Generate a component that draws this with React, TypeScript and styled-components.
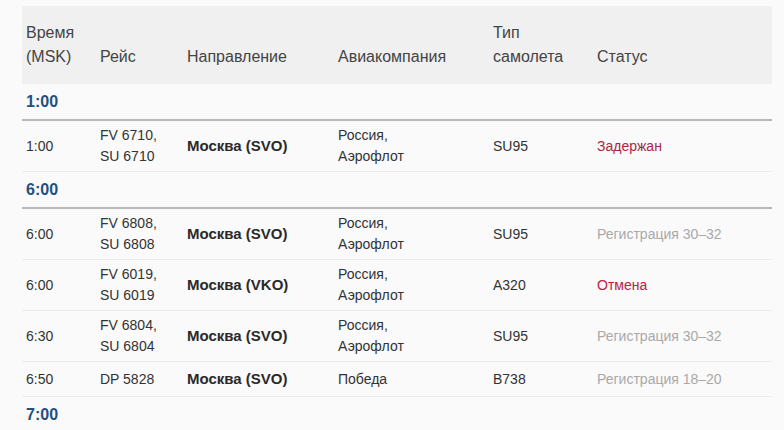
import { Fragment } from "react";
import styled, { createGlobalStyle } from "styled-components";

type Flight = {
  time: string;
  flights: string[];
  dest: string;
  airline: string[];
  plane: string;
  status: string;
  kind: "late" | "cancel" | "muted";
};

type Group = { hour: string; rows: Flight[] };

const aeroflot = ["Россия,", "Аэрофлот"];

const groups: Group[] = [
  {
    hour: "1:00",
    rows: [
      {
        time: "1:00",
        flights: ["FV 6710,", "SU 6710"],
        dest: "Москва (SVO)",
        airline: aeroflot,
        plane: "SU95",
        status: "Задержан",
        kind: "late",
      },
    ],
  },
  {
    hour: "6:00",
    rows: [
      {
        time: "6:00",
        flights: ["FV 6808,", "SU 6808"],
        dest: "Москва (SVO)",
        airline: aeroflot,
        plane: "SU95",
        status: "Регистрация 30–32",
        kind: "muted",
      },
      {
        time: "6:00",
        flights: ["FV 6019,", "SU 6019"],
        dest: "Москва (VKO)",
        airline: aeroflot,
        plane: "A320",
        status: "Отмена",
        kind: "cancel",
      },
      {
        time: "6:30",
        flights: ["FV 6804,", "SU 6804"],
        dest: "Москва (SVO)",
        airline: aeroflot,
        plane: "SU95",
        status: "Регистрация 30–32",
        kind: "muted",
      },
      {
        time: "6:50",
        flights: ["DP 5828"],
        dest: "Москва (SVO)",
        airline: ["Победа"],
        plane: "B738",
        status: "Регистрация 18–20",
        kind: "muted",
      },
    ],
  },
  { hour: "7:00", rows: [] },
];

export default function App() {
  return (
    <>
      <GlobalStyle />
      <Page>
        <Board>
          <colgroup>
            <col style={{ width: 74 }} />
            <col style={{ width: 87 }} />
            <col style={{ width: 151 }} />
            <col style={{ width: 155 }} />
            <col style={{ width: 104 }} />
            <col style={{ width: 179 }} />
          </colgroup>
          <thead>
            <tr>
              <HeadCell>
                Время
                <br />
                (MSK)
              </HeadCell>
              <HeadCell>Рейс</HeadCell>
              <HeadCell>Направление</HeadCell>
              <HeadCell>Авиакомпания</HeadCell>
              <HeadCell>
                Тип
                <br />
                самолета
              </HeadCell>
              <HeadCell>Статус</HeadCell>
            </tr>
          </thead>
          <tbody>
            {groups.map((g) => (
              <Fragment key={g.hour}>
                <tr>
                  <HourCell colSpan={6}>{g.hour}</HourCell>
                </tr>
                {g.rows.map((f, i) => (
                  <tr key={i}>
                    <Cell>{f.time}</Cell>
                    <Cell>
                      {f.flights.map((x) => (
                        <div key={x}>{x}</div>
                      ))}
                    </Cell>
                    <DestCell>{f.dest}</DestCell>
                    <Cell>
                      {f.airline.map((x) => (
                        <div key={x}>{x}</div>
                      ))}
                    </Cell>
                    <Cell>{f.plane}</Cell>
                    <StatusCell $kind={f.kind}>{f.status}</StatusCell>
                  </tr>
                ))}
              </Fragment>
            ))}
          </tbody>
        </Board>
      </Page>
    </>
  );
}

const GlobalStyle = createGlobalStyle`
  body {
    margin: 0;
    background: #fafafa;
    font-family: "Liberation Sans", Arial, sans-serif;
  }
`;

const Page = styled.div`
  padding: 6px 0 0 22px;
  height: 430px;
  overflow: hidden;
  box-sizing: border-box;
`;

const Board = styled.table`
  width: 750px;
  border-collapse: collapse;
  table-layout: fixed;
`;

const HeadCell = styled.th`
  background: #f0f0f0;
  color: #444;
  font-size: 16px;
  font-weight: normal;
  line-height: 24px;
  text-align: left;
  vertical-align: bottom;
  padding: 15px 4px;
`;

const HourCell = styled.td`
  color: #22507f;
  font-size: 16px;
  font-weight: bold;
  line-height: 24px;
  padding: 6px 4px 5px;
  border-bottom: 2px solid #b8b8b8;
`;

const Cell = styled.td`
  color: #333;
  font-size: 14px;
  line-height: 21px;
  padding: 4px;
  vertical-align: middle;
  border-bottom: 1px solid #ebebeb;
`;

const DestCell = styled(Cell)`
  color: #2a2a2a;
  font-size: 15px;
  font-weight: bold;
  line-height: 24px;
  padding: 5px 4px;
`;

const statusColors = {
  late: "#a8283f",
  cancel: "#c0213f",
  muted: "#a9a9a9",
};

const StatusCell = styled(Cell)<{ $kind: Flight["kind"] }>`
  color: ${(p) => statusColors[p.$kind]};
`;
